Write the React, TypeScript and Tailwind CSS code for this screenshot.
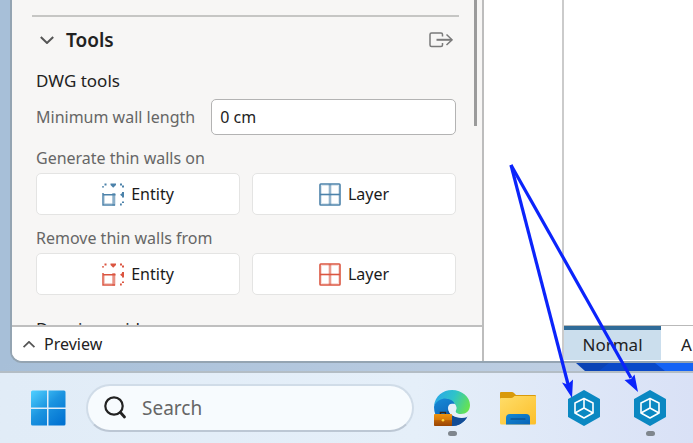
import React from "react";

type IconProps = { className?: string };

const ChevronIcon = ({ className }: IconProps) => (
  <svg className={className} viewBox="0 0 14 8" fill="none" stroke="#555" strokeWidth="2">
    <path d="M0.8 1 L7 7 L13.2 1" />
  </svg>
);

const ExportIcon = () => (
  <svg className="h-4 w-6" viewBox="0 0 24 16" fill="none" stroke="#7a7a7a" strokeWidth="1.5">
    <path d="M13.5 4.500V2.5Q13.5 1 12 1H2.5Q1 1 1 2.5V13Q1 14.5 2.5 14.5H12Q13.5 14.5 13.5 13V11" />
    <path strokeWidth="2" d="M7.500 7.800H22.500" />
    <path d="M17.500 2.500L23 7.800L17.500 13" />
  </svg>
);

const EntityIcon = ({ className }: IconProps) => (
  <svg className={className} viewBox="0 0 22 23" fill="none" stroke="currentColor" strokeWidth="1.5">
    <path d="M1 10V22H13M1 11.800H13.500" />
    <path strokeWidth="3" opacity="0.65" d="M11.800 10V22.500" />
    <path strokeWidth="1" opacity="0.3" d="M2.500 20.500H10.500M2.500 12V21" />
    <path strokeWidth="2" d="M1 4.500V3.200M2.500 1.500H4.500M18 1.500H20M21 2.500V4.500M21 9V14.500M21 18.500V20M19.800 21.500H18" />
    <path fill="currentColor" stroke="none" d="M8.500 0.500H14V2L11.200 4.800L8.500 2ZM20.800 9.500V14L18 11.800Z" />
  </svg>
);

const LayerIcon = ({ className }: IconProps) => (
  <svg className={className} viewBox="0 0 22 23" fill="none" stroke="currentColor" strokeWidth="1.6">
    <rect x="1" y="1" width="20" height="21" rx="0.8" />
    <path d="M1 11.500H21" />
    <path strokeWidth="2.600" opacity="0.6" d="M11 1V22" />
    <path strokeWidth="1" opacity="0.2" d="M2.500 2.500H19.500V20.500H2.500Z" />
  </svg>
);

const StartIcon = () => (
  <svg className="size-9" viewBox="0 0 36 36">
    <defs>
      <linearGradient id="start" gradientUnits="userSpaceOnUse" x1="1" y1="1" x2="30" y2="35">
        <stop offset="0" stopColor="#4fd0ff" />
        <stop offset="0.5" stopColor="#1c94e0" />
        <stop offset="1" stopColor="#0273d2" />
      </linearGradient>
    </defs>
    <g fill="url(#start)">
      <path d="M2.500 0.500H17V17.500H1V2Q1 0.500 2.500 0.500Z" />
      <path d="M18.500 0.500H34Q35.500 0.500 35.500 2V17.500H18.500Z" />
      <path d="M1 19H17V35.500H2.500Q1 35.500 1 34Z" />
      <path d="M18.500 19H35.500V34Q35.500 35.500 34 35.500H18.500Z" />
    </g>
  </svg>
);

const SearchIcon = () => (
  <svg className="size-6 shrink-0" viewBox="0 0 24 24" fill="none" stroke="#222" strokeWidth="2.200">
    <circle cx="10" cy="10" r="8.700" />
    <path strokeWidth="2.800" strokeLinecap="round" d="M16.500 16.500L20.500 21" />
  </svg>
);

const EdgeIcon = () => (
  <svg className="size-9" viewBox="0 0 36 36">
    <defs>
      <linearGradient id="edgeTop" x1="0" y1="0.300" x2="1" y2="0.600">
        <stop offset="0" stopColor="#2ba8e8" />
        <stop offset="0.500" stopColor="#2fc3c9" />
        <stop offset="1" stopColor="#66e350" />
      </linearGradient>
      <linearGradient id="edgeMid" x1="0.200" y1="0" x2="0.700" y2="1">
        <stop offset="0" stopColor="#1687d4" />
        <stop offset="1" stopColor="#0b56ad" />
      </linearGradient>
      <linearGradient id="case" x1="0" y1="0" x2="0" y2="1">
        <stop offset="0" stopColor="#ee9410" />
        <stop offset="0.480" stopColor="#d77a08" />
        <stop offset="0.550" stopColor="#b95e05" />
        <stop offset="1" stopColor="#994504" />
      </linearGradient>
    </defs>
    <path fill="url(#edgeMid)" d="M0 17C1 10 6 8 11 8C17 8 21 11 21 14C16 13 13 18 15 22C18 28 27 28 33.500 26.500C30 33 24 36 18 36C8 36 0 28 0 17Z" />
    <path fill="#124d96" d="M14 19C14 26 24 29 33.500 26.500C30 33 24 36 18 36C15 32 12 25 14 19Z" />
    <path fill="url(#edgeTop)" d="M0 16C1 6 9 0 18 0C28 0 36 7 36 15C36 21 32 24 27 24C23 24 21 22.500 21.500 21C23 19 23 17 21 14C18 8 6 5 0 16Z" />
    <path fill="#e7f0f9" d="M14 18C14 14.500 17 13 19.500 14C23 15.500 22.500 19 21.500 21C21.500 23 24 24.500 28 24.500C30 24.500 32 24 33.500 23.500V27C25 30 15 26 14 18Z" />
    <path fill="none" stroke="#33251d" strokeWidth="1.500" d="M6.500 24V22.500H11.500V24" />
    <rect y="24" width="18" height="12" rx="0.800" fill="url(#case)" />
    <circle cx="9" cy="30.300" r="1.300" fill="#ffd339" />
  </svg>
);

const FolderIcon = () => (
  <svg className="size-9" viewBox="0 0 36 36">
    <defs>
      <linearGradient id="folder" x1="0" y1="0" x2="1" y2="1">
        <stop offset="0" stopColor="#ffdd69" />
        <stop offset="1" stopColor="#fcbf2a" />
      </linearGradient>
      <linearGradient id="handle" x1="0" y1="0" x2="1" y2="1">
        <stop offset="0" stopColor="#1488d2" />
        <stop offset="1" stopColor="#0864b8" />
      </linearGradient>
    </defs>
    <path fill="#d99a0b" d="M1 2H12Q13 2 14 3L16 5H35Q36 5 36 6V20H0V3Q0 2 1 2Z" />
    <path fill="url(#folder)" d="M0 9Q0 8 1 8H11Q12.500 8 13.500 7L14.500 6H35Q36 6 36 7V33Q36 34.500 34.500 34.500H1.500Q0 34.500 0 33Z" />
    <path fill="url(#handle)" d="M6 34.500V28Q6 24 10 24H26Q30 24 30 28V34.500Z" />
    <path stroke="#08457f" strokeWidth="1.200" strokeLinecap="round" d="M11 29H25" />
  </svg>
);

const HexagonIcon = () => (
  <svg className="size-9" viewBox="0 0 36 36">
    <path
      fill="#0b88c2"
      stroke="#0b88c2"
      strokeWidth="2"
      strokeLinejoin="round"
      d="M18 1L33 9.500V26.500L18 35L3 26.500V9.500Z"
    />
    <g fill="none" stroke="#fff" strokeWidth="1.600" strokeLinejoin="round">
      <path d="M18 8.500L27 13V23L18 28L9 23V13Z" />
      <path d="M18 8.500V18L9 23M18 18L27 23" />
    </g>
  </svg>
);

const ToolButton = ({
  icon: Icon,
  color,
  label,
}: {
  icon: React.FC<IconProps>;
  color: string;
  label: string;
}) => (
  <button
    type="button"
    className="flex h-[42px] flex-1 items-center justify-center gap-[7px] rounded-[5px] border border-[#e4e4e3] bg-white text-base text-[#1b1b1b]"
  >
    <Icon className={`h-[23px] w-[22px] ${color}`} />
    {label}
  </button>
);

const ToolGroup = ({ title, color }: { title: string; color: string }) => (
  <div role="group" aria-label={title} className="pt-[11px]">
    <p className="mb-[3px] text-base leading-6 text-[#666]">{title}</p>
    <div className="flex gap-3">
      <ToolButton icon={EntityIcon} color={color} label="Entity" />
      <ToolButton icon={LayerIcon} color={color} label="Layer" />
    </div>
  </div>
);

const ToolsPanel = () => (
  <aside className="flex min-h-0 min-w-0 flex-col border-r-2 border-[#bdbdbd] bg-[#f7f6f5]">
    <div className="flex min-h-0 flex-1 overflow-hidden">
      <div className="min-w-0 flex-1 pt-[15px] pl-6">
        <div className="-ml-1 h-0.5 bg-[#c6c6c4]" />
        <div className="flex h-[46px] items-center pr-1.5 pl-1">
          <button type="button" className="flex items-center gap-3 text-[19px] font-semibold text-[#222]">
            <ChevronIcon className="h-2 w-3.5" />
            Tools
          </button>
          <button type="button" aria-label="Detach panel" className="ml-auto">
            <ExportIcon />
          </button>
        </div>
        <div className="pr-[3px]">
          <h2 className="h-9 text-[17px] leading-9 text-[#222]">DWG tools</h2>
          <div className="flex items-center gap-4">
            <label htmlFor="wall-length" className="text-base whitespace-nowrap text-[#666]">
              Minimum wall length
            </label>
            <input
              id="wall-length"
              defaultValue="0 cm"
              className="h-9 min-w-0 flex-1 rounded-[5px] border border-[#b3b3b3] bg-white px-2 text-base text-[#222]"
            />
          </div>
          <ToolGroup title="Generate thin walls on" color="text-[#4c82aa]" />
          <ToolGroup title="Remove thin walls from" color="text-[#db5540]" />
          <h2 className="mt-[22px] text-[17px] leading-6 text-[#222]">Drawing grid</h2>
        </div>
      </div>
      <div className="w-[23px] shrink-0 pl-[15px]">
        <div className="h-[126px] w-[3px] bg-[#9b9b9b]" />
      </div>
    </div>
    <button
      type="button"
      className="flex h-9 items-center gap-2 border-t-2 border-[#bfbfbf] bg-white pl-2.5 text-base text-[#222]"
    >
      <ChevronIcon className="h-[7px] w-3.5 rotate-180" />
      Preview
    </button>
  </aside>
);

const Drawing = () => (
  <main className="flex min-w-0 flex-col overflow-hidden border-l-2 border-[#cbcbcb]">
    <div className="flex-1" />
    <div className="flex h-9 border-t border-[#b9b9b9] pb-px text-[17px] text-[#222]">
      <button type="button" className="w-[97px] shrink-0 border-t-4 border-[#2f6b98] bg-[#cbdeed] leading-7">
        Normal
      </button>
      <button type="button" className="shrink-0 px-5 pt-1">
        A
      </button>
    </div>
  </main>
);

const TaskbarItem = ({
  label,
  open,
  children,
}: {
  label: string;
  open?: boolean;
  children: React.ReactNode;
}) => (
  <button type="button" aria-label={label} className="relative shrink-0">
    {children}
    {open && <span className="absolute -bottom-2.5 left-3.5 h-[5px] w-[9px] rounded-full bg-[#7f868d]" />}
  </button>
);

const Taskbar = () => (
  <footer className="flex h-[72px] shrink-0 items-center border-t-2 border-[#b3bdc5] bg-linear-to-r from-[#e1ecf7] via-[#e5eff9] via-60% to-[#d9e1f6] pl-[30px]">
    <button type="button" aria-label="Start" className="shrink-0">
      <StartIcon />
    </button>
    <label className="mx-5 flex h-12 w-[328px] items-center gap-3.5 rounded-full border-2 border-[#d0dce8] border-b-[#bcc7d4] bg-[#f7fbfe] pl-4">
      <SearchIcon />
      <input
        type="search"
        aria-label="Search"
        placeholder="Search"
        className="min-w-0 flex-1 bg-transparent text-[19px] placeholder:text-[#666]"
      />
    </label>
    <div className="flex gap-[30px]">
      <TaskbarItem label="Edge" open>
        <EdgeIcon />
      </TaskbarItem>
      <TaskbarItem label="Explorer">
        <FolderIcon />
      </TaskbarItem>
      <TaskbarItem label="Modeler">
        <HexagonIcon />
      </TaskbarItem>
      <TaskbarItem label="Modeler, second window" open>
        <HexagonIcon />
      </TaskbarItem>
    </div>
  </footer>
);

// callout arrows pointing at the two taskbar icons
const Arrows = () => (
  <svg className="pointer-events-none absolute top-0 left-0 h-[443px] w-[693px]" viewBox="0 0 693 443">
    <g stroke="#0b24fb" strokeWidth="3.200">
      <path d="M511 165L568.500 386" />
      <path d="M511 165L631 378" />
    </g>
    <g fill="#0b24fb">
      <path d="M572 398L562 382.500L567.500 384.500L573 379.500Z" />
      <path d="M638 392L624.500 380L631 379L634.500 374.500Z" />
    </g>
  </svg>
);

export default function App() {
  return (
    <div className="relative flex h-screen flex-col overflow-hidden bg-[#a7bfd8] font-['Noto_Sans',sans-serif]">
      <div className="ml-2.5 grid min-h-0 flex-1 grid-cols-[472fr_78fr_131fr] grid-rows-[minmax(0,1fr)] overflow-hidden rounded-bl-xl border-b-2 border-l-2 border-[#94a4b2] bg-white">
        <ToolsPanel />
        <div />
        <Drawing />
      </div>
      <div className="flex h-2 shrink-0 justify-end bg-linear-to-r from-[#a7bfd8] to-[#c3d2e5]">
        <svg className="h-2 w-[118px]" viewBox="0 0 118 8">
          <path fill="#0b43b5" d="M1 0H118V8H10Z" />
          <path fill="#0a55ec" d="M24 8L34 0H84L94 8Z" opacity="0.350" />
          <path fill="#1463f5" d="M80 0H118V8H90Z" />
        </svg>
      </div>
      <Taskbar />
      <Arrows />
    </div>
  );
}
